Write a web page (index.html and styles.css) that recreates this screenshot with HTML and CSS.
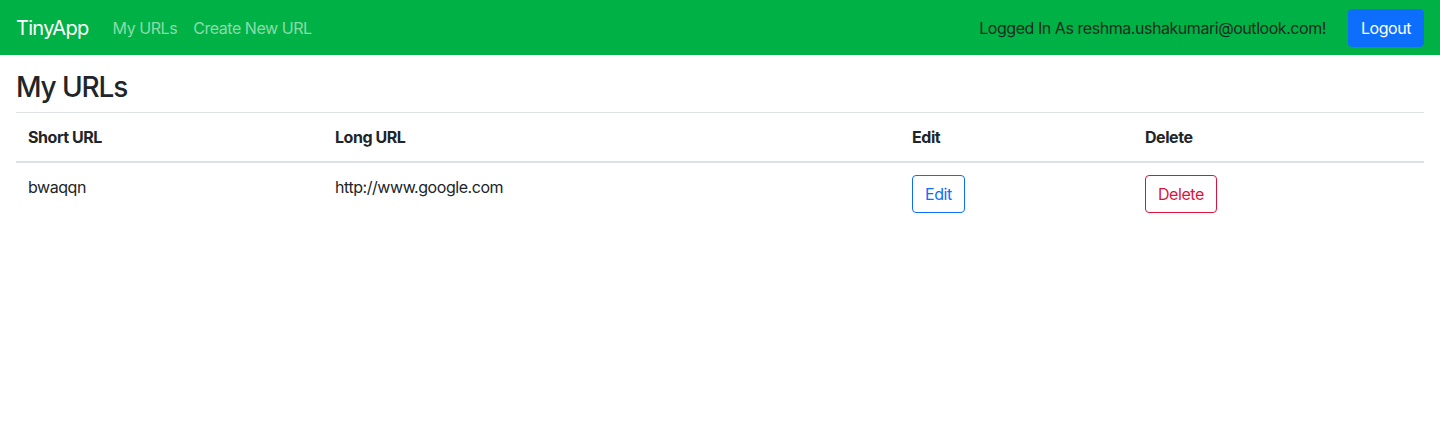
FILE: index.html
```html
<!DOCTYPE html>
<html lang="en">
<head>
<meta charset="utf-8">
<title>TinyApp</title>
<link rel="stylesheet" href="styles.css">
</head>
<body>
<nav class="navbar">
  <div class="nav-left">
    <a class="brand" href="#">TinyApp</a>
    <a class="nav-link" href="#">My URLs</a>
    <a class="nav-link" href="#">Create New URL</a>
  </div>
  <div class="nav-right">
    <span class="logged">Logged In As reshma.ushakumari@outlook.com!</span>
    <button class="btn btn-primary">Logout</button>
  </div>
</nav>
<main class="main">
  <h3 class="title">My URLs</h3>
  <table class="table">
    <thead>
      <tr>
        <th class="col-short">Short URL</th>
        <th class="col-long">Long URL</th>
        <th class="col-edit">Edit</th>
        <th class="col-delete">Delete</th>
      </tr>
    </thead>
    <tbody>
      <tr>
        <td>bwaqqn</td>
        <td>http://www.google.com</td>
        <td><button class="btn btn-outline-primary">Edit</button></td>
        <td><button class="btn btn-outline-danger">Delete</button></td>
      </tr>
    </tbody>
  </table>
</main>
</body>
</html>
```

FILE: styles.css
```css
* { box-sizing: border-box; }
html, body { margin: 0; padding: 0; }
body {
  font-family: Inter, "Liberation Sans", Arial, sans-serif;
  font-size: 16px;
  line-height: 1.5;
  letter-spacing: -0.028em;
  color: #212529;
  background: #fff;
}
.navbar {
  height: 55px;
  background: #00b246;
  display: flex;
  align-items: center;
  justify-content: space-between;
  padding: 8px 16px;
}
.nav-left { display: flex; align-items: center; }
.brand {
  font-size: 20px;
  letter-spacing: -0.035em;
  color: #fff;
  text-decoration: none;
  margin-right: 16px;
  padding: 5px 0;
}
.nav-link {
  color: rgba(255,255,255,0.55);
  text-decoration: none;
  padding: 8px;
}
.nav-right { display: flex; align-items: center; gap: 22px; }
.logged { color: #1c2a21; }
.btn {
  font-family: inherit;
  font-size: 16px;
  line-height: 1.5;
  letter-spacing: inherit;
  padding: 6px 12px;
  border-radius: 4px;
  border: 1px solid transparent;
  background: transparent;
  cursor: pointer;
}
.btn-primary { background: #0d6efd; border-color: #0d6efd; color: #fff; }
.btn-outline-primary { color: #0d6efd; border-color: #0d6efd; }
.btn-outline-danger { color: #dc143c; border-color: #dc143c; }
.main { padding: 0 16px; }
.title {
  font-size: 28px;
  font-weight: 500;
  line-height: 1.2;
  letter-spacing: -0.04em;
  margin: 16px 0 7px;
}
.table {
  width: 100%;
  border-collapse: collapse;
}
.table th, .table td {
  text-align: left;
  vertical-align: top;
  padding: 12px;
  border-top: 1px solid #dee2e6;
}
.table th { font-weight: 700; }
.table thead th { border-bottom: 2px solid #dee2e6; }
.col-short { width: 307px; }
.col-long { width: 577px; }
.col-edit { width: 233px; }
```
